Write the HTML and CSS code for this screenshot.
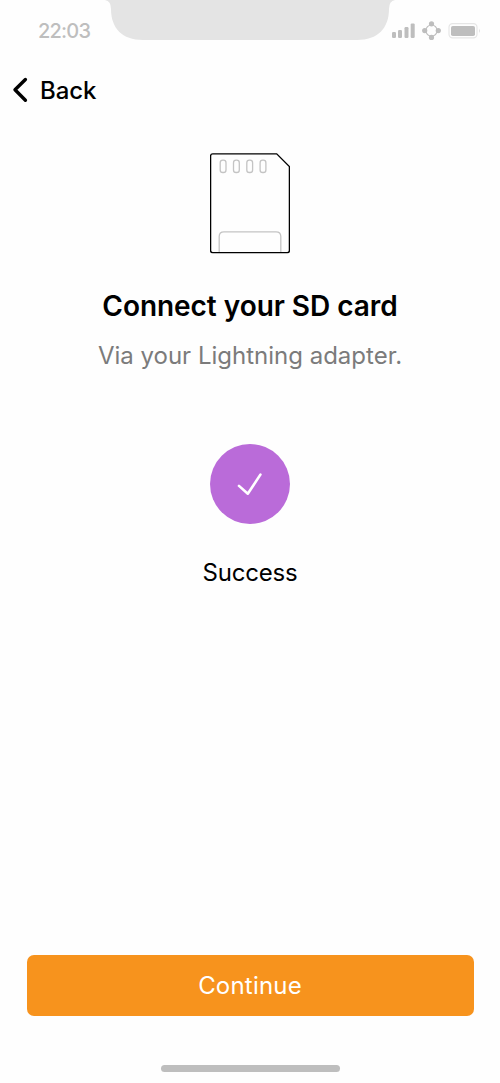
FILE: index.html
```html
<!DOCTYPE html>
<html lang="en">
<head>
<meta charset="utf-8">
<title>Connect your SD card</title>
<link rel="stylesheet" href="styles.css">
</head>
<body>
<div class="screen">
  <header class="status">
    <span class="time">22:03</span>
    <svg class="notch" width="290" height="41" viewBox="0 0 290 41"><path d="M0 0H290Q284 1 284 9C284 28 273 40 252 40H38C17 40 6 28 6 9Q6 1 0 0Z" fill="#e4e4e4"/></svg>
    <svg class="indicators" width="90" height="20" viewBox="391 21 90 20">
      <g fill="#bebebe">
        <rect x="392" y="32" width="4" height="6" rx="1.2"/>
        <rect x="398" y="30" width="4" height="8" rx="1.2"/>
        <rect x="404.5" y="27" width="4" height="11" rx="1.2"/>
        <rect x="410.7" y="23.4" width="4" height="14.6" rx="1.2"/>
        <circle cx="431.5" cy="23.8" r="2.6"/>
        <circle cx="431.5" cy="37.4" r="2.6"/>
        <circle cx="424.7" cy="30.6" r="2.6"/>
        <circle cx="438.3" cy="30.6" r="2.6"/>
        <rect x="451" y="26" width="24" height="10" rx="1.8"/>
      </g>
      <circle cx="431.5" cy="30.6" r="5.6" fill="none" stroke="#bebebe" stroke-width="1.2"/>
      <rect x="449" y="23.7" width="28" height="14.2" rx="3.6" fill="none" stroke="#e6e6e6" stroke-width="1.2"/>
      <path d="M479 28.5q1.8 2.2 0 4.4z" fill="#dedede"/>
    </svg>
  </header>
  <nav class="nav">
    <svg width="16" height="26" viewBox="0 0 16 26"><path d="M13.4 2.5L3 12.8L13.4 23.2" fill="none" stroke="#000" stroke-width="3.4" stroke-linecap="round" stroke-linejoin="round"/></svg>
    <span class="back">Back</span>
  </nav>
  <main class="content">
    <svg class="card" width="80" height="101" viewBox="210 153 80 101" fill="none">
      <g stroke="#c4c4c4" stroke-width="1.3">
        <rect x="220.2" y="160.2" width="5.8" height="12.3" rx="2.6"/>
        <rect x="233.5" y="160.2" width="5.8" height="12.3" rx="2.6"/>
        <rect x="246.8" y="160.2" width="5.8" height="12.3" rx="2.6"/>
        <rect x="260.1" y="160.2" width="5.8" height="12.3" rx="2.6"/>
        <path d="M219.2 252.5V236.6Q219.2 231.8 224 231.8H276Q280.8 231.8 280.8 236.6V252.5"/>
      </g>
      <path d="M212.7 153.9H276.7L289.4 166.5V250.6Q289.4 252.7 287.3 252.7H212.7Q210.6 252.7 210.6 250.6V156Q210.6 153.9 212.7 153.9Z" stroke="#000" stroke-width="1.33"/>
    </svg>
    <h1 class="title">Connect your SD card</h1>
    <p class="subtitle">Via your Lightning adapter.</p>
    <div class="badge">
      <svg width="80" height="80" viewBox="210 444 80 80"><path d="M239 485.9L247.8 493.7L260.4 474.6" fill="none" stroke="#fff" stroke-width="2.6" stroke-linecap="round" stroke-linejoin="round"/></svg>
    </div>
    <p class="result">Success</p>
  </main>
  <footer class="footer">
    <button class="continue">Continue</button>
    <div class="home"></div>
  </footer>
</div>
</body>
</html>
```
FILE: styles.css
```css
* { box-sizing: border-box; }
body { margin: 0; background: #fefefe; font-family: Inter, "Liberation Sans", sans-serif; color: #000; }
.screen { height: 1083px; display: flex; flex-direction: column; }
svg { display: block; flex: none; }
.status { height: 60px; display: flex; align-items: flex-start; }
.time { width: 105px; padding: 19px 0 0 38px; font-size: 20px; line-height: 24px; font-weight: 500; letter-spacing: -0.8px; color: #bebebe; }
.indicators { margin: 21px 0 0 -4px; }
.nav { height: 60px; display: flex; align-items: center; gap: 12px; padding-left: 12px; }
.back { padding-top: 2px; font-size: 24px; line-height: 30px; font-weight: 500; letter-spacing: -0.1px; }
.content { flex: 1; display: flex; flex-direction: column; align-items: center; padding-top: 33px; }
.title { margin: 34px 0 0; font-size: 28px; line-height: 36px; font-weight: 600; letter-spacing: -0.04px; }
.subtitle { margin: 17px 0 0; font-size: 24px; line-height: 30px; color: #7b7b7b; }
.badge { width: 80px; height: 80px; margin-top: 73px; border-radius: 50%; background: #ba6bd9; }
.result { margin: 34px 0 0; font-size: 24px; line-height: 30px; letter-spacing: -0.2px; }
.footer { display: flex; flex-direction: column; align-items: center; padding: 0 26.5px 11px; }
.continue { width: 100%; height: 61.5px; padding: 2px 0 0; border: 0; border-radius: 7px; background: #f7931d; color: #fff; font: 400 24px/30px Inter, "Liberation Sans", sans-serif; letter-spacing: 0.2px; }
.home { width: 179px; height: 7px; margin-top: 49px; border-radius: 4px; background: #bebebe; }
```
